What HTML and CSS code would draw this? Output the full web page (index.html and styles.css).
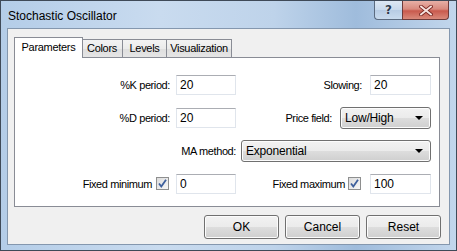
FILE: index.html
```html
<!DOCTYPE html>
<html>
    <head>
        <link rel="stylesheet" href="styles.css">
        <title>Stochastic Oscillator</title>
    </head>
    <body>
        <div class="window">
            <div class="titlebar">
                <span class="title">Stochastic Oscillator</span>
                <div class="caption-buttons">
                    <span class="cap-btn help-button">?</span>
                    <span class="cap-btn close-button">
                        <svg width="14" height="11" viewBox="0 0 14 11">
                            <path d="M2 1.5 L12 9.5 M12 1.5 L2 9.5" stroke="#7a2a24" stroke-width="3.6" stroke-linecap="square"/>
                            <path d="M2 1.5 L12 9.5 M12 1.5 L2 9.5" stroke="#f6e4e0" stroke-width="1.8" stroke-linecap="square"/>
                        </svg>
                    </span>
                </div>
            </div>

            <div class="client">
                <div class="tabs">
                    <span class="tab tab-parameters is-active">Parameters</span>
                    <span class="tab tab-colors">Colors</span>
                    <span class="tab tab-levels">Levels</span>
                    <span class="tab tab-visualization">Visualization</span>
                </div>

                <div class="panel">
                    <div class="row">
                        <label class="label label-first">%K period:</label>
                        <input class="text-input input-first" value="20">
                        <label class="label label-slowing">Slowing:</label>
                        <input class="text-input input-second" value="20">
                    </div>
                    <div class="row">
                        <label class="label label-first">%D period:</label>
                        <input class="text-input input-first" value="20">
                        <label class="label label-price">Price field:</label>
                        <div class="combo combo-price">
                            <span>Low/High</span>
                            <span class="combo-arrow"></span>
                        </div>
                    </div>
                    <div class="row">
                        <label class="label label-method">MA method:</label>
                        <div class="combo combo-method">
                            <span>Exponential</span>
                            <span class="combo-arrow"></span>
                        </div>
                    </div>
                    <div class="row">
                        <label class="label label-min">Fixed minimum</label>
                        <span class="checkbox checkbox-min">
                            <svg width="13" height="13" viewBox="0 0 13 13">
                                <path d="M3 6.5 L5.3 9.5 L10 2.8" fill="none" stroke="#3d5f9c" stroke-width="1.8"/>
                            </svg>
                        </span>
                        <input class="text-input input-min" value="0">
                        <label class="label label-max">Fixed maximum</label>
                        <span class="checkbox checkbox-max">
                            <svg width="13" height="13" viewBox="0 0 13 13">
                                <path d="M3 6.5 L5.3 9.5 L10 2.8" fill="none" stroke="#3d5f9c" stroke-width="1.8"/>
                            </svg>
                        </span>
                        <input class="text-input input-second" value="100">
                    </div>
                </div>

                <div class="buttons">
                    <button class="dialog-button">OK</button>
                    <button class="dialog-button">Cancel</button>
                    <button class="dialog-button">Reset</button>
                </div>
            </div>
        </div>
    </body>
</html>
```

FILE: styles.css
```css
body {
    margin: 0;
    font-family: "Liberation Sans", Arial, sans-serif;
    font-size: 11px;
    color: #000000;
}

.window {
    width: 457px;
    height: 251px;
    box-sizing: border-box;
    border: 1px solid #3f4a58;
    padding: 0 6px 0 6px;
    background: linear-gradient(to right, #b4cde8, #c9dbef 35%, #bed3ea 60%, #9fbcdc 78%, #c2d6ec);
}

.titlebar {
    height: 27px;
    display: flex;
    align-items: flex-start;
}

.title {
    font-size: 12px;
    padding-left: 1px;
    margin-top: 8px;
}

.caption-buttons {
    margin-left: auto;
    margin-right: 1px;
    display: flex;
}

.cap-btn {
    height: 19px;
    box-sizing: border-box;
    display: flex;
    align-items: center;
    justify-content: center;
    border: 1px solid #5b6b80;
    border-top: none;
}

.help-button {
    width: 28px;
    border-right: none;
    border-radius: 0 0 0 4px;
    background: linear-gradient(#dde8f4, #c8d9ec 50%, #b7cce4 51%, #c9dbee);
    font-family: "DejaVu Sans", sans-serif;
    font-weight: bold;
    font-size: 12px;
    color: #2c3a4c;
    text-shadow: 0 0 1px #ffffff;
}

.close-button {
    width: 47px;
    border-color: #6e3b3a;
    border-radius: 0 0 4px 0;
    background: linear-gradient(#e7b0a6, #d88a7e 45%, #c95a4d 55%, #d98a7b);
}

.client {
    height: 217px;
    box-sizing: border-box;
    border: 1px solid #8497ae;
    background-color: #f0f0f0;
    padding: 9px 9px 0 6px;
}

.tabs {
    display: flex;
    align-items: flex-end;
    height: 19px;
    position: relative;
    z-index: 1;
    letter-spacing: -0.3px;
}

.tab {
    box-sizing: border-box;
    height: 18px;
    line-height: 17px;
    border: 1px solid #898c95;
    border-bottom: none;
    background: linear-gradient(#f3f3f3, #ebebeb 50%, #dedede 51%, #e5e5e5);
    text-align: center;
    margin-left: -1px;
}

.tab-parameters {
    width: 69px;
    margin-left: 0;
}

.tab-colors {
    width: 42px;
}

.tab-levels {
    width: 45px;
}

.tab-visualization {
    width: 66px;
}

.tab.is-active {
    height: 21px;
    line-height: 19px;
    background: #ffffff;
    margin-bottom: -1px;
    margin-right: -1px;
    position: relative;
    z-index: 2;
}

.panel {
    box-sizing: border-box;
    width: 426px;
    height: 150px;
    border: 1px solid #898c95;
    background-color: #ffffff;
    padding-top: 16px;
    display: flex;
    flex-direction: column;
    gap: 12px;
}

.row {
    display: flex;
    align-items: center;
    height: 21px;
}

.label {
    text-align: right;
    box-sizing: border-box;
    letter-spacing: -0.4px;
}

.label-first {
    width: 161px;
    padding-right: 6px;
}

.label-slowing {
    width: 134px;
    padding-right: 8px;
}

.label-price {
    width: 104px;
    padding-right: 8px;
}

.label-method {
    width: 226px;
    padding-right: 5px;
}

.label-min {
    width: 141px;
    padding-right: 4px;
}

.label-max {
    width: 112px;
    padding-right: 3px;
}

.text-input {
    box-sizing: border-box;
    height: 20px;
    border: 1px solid #e0e5ec;
    border-top-color: #abadb3;
    padding: 0 3px;
    font-family: "Liberation Sans", Arial, sans-serif;
    font-size: 12px;
    margin: 0;
    background: #ffffff;
}

.input-first {
    width: 60px;
}

.input-second {
    width: 61px;
}

.input-min {
    width: 60px;
    margin-left: 7px;
}

.combo {
    box-sizing: border-box;
    height: 22px;
    border: 1px solid #707070;
    border-radius: 3px;
    background: linear-gradient(#f2f2f2, #ebebeb 50%, #dddddd 51%, #cfcfcf);
    box-shadow: inset 0 0 0 1px #fcfcfc;
    display: flex;
    align-items: center;
    padding: 0 4px;
    font-size: 12px;
    letter-spacing: -0.2px;
}

.combo-price {
    width: 91px;
}

.combo-method {
    width: 190px;
}

.combo-arrow {
    margin-left: auto;
    margin-right: 3px;
    width: 0;
    height: 0;
    border-left: 4px solid transparent;
    border-right: 4px solid transparent;
    border-top: 4px solid #000000;
}

.checkbox {
    box-sizing: border-box;
    width: 13px;
    height: 13px;
    border: 1px solid #8e8f8f;
    background: linear-gradient(135deg, #dcdcdc, #f7f7f7);
    display: flex;
    align-items: center;
    justify-content: center;
}

.checkbox svg {
    margin: -1px;
}

.checkbox-max {
    margin-right: 9px;
}

.buttons {
    display: flex;
    justify-content: flex-end;
    gap: 6px;
    margin-top: 8px;
    width: 427px;
}

.dialog-button {
    box-sizing: border-box;
    width: 75px;
    height: 24px;
    border: 1px solid #707070;
    border-radius: 3px;
    background: linear-gradient(#f2f2f2, #ebebeb 50%, #dddddd 51%, #cfcfcf);
    box-shadow: inset 0 0 0 1px #fcfcfc;
    font-family: "Liberation Sans", Arial, sans-serif;
    font-size: 12px;
    padding: 0;
}
```
